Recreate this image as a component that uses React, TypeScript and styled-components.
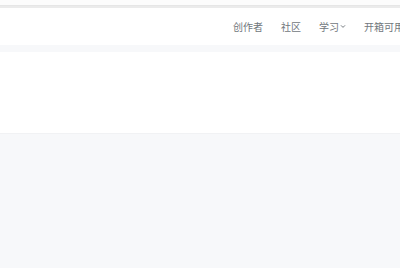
import React from "react";
import styled, { createGlobalStyle } from "styled-components";

const Global = createGlobalStyle`
  html, body { margin: 0; padding: 0; background: #f7f8fa; }
  body { font-family: "Noto Sans CJK SC", "Noto Sans", sans-serif; overflow: hidden; }
`;

const Page = styled.div`
  width: 400px;
  height: 268px;
  display: flex;
  flex-direction: column;
  overflow: hidden;
  background: #f7f8fa;
`;

const TopStrip = styled.div`
  height: 5px;
  background: #fcfcfc;
  border-bottom: 1px solid #e6e6e6;
  box-shadow: 0 2px 0 #ebebeb;
  flex-shrink: 0;
`;

const Header = styled.header`
  height: 37px;
  margin-top: 2px;
  background: #ffffff;
  display: flex;
  align-items: center;
  padding-left: 233px;
  flex-shrink: 0;
  overflow: hidden;
`;

const Nav = styled.nav`
  display: flex;
  align-items: center;
  gap: 18px;
  white-space: nowrap;
`;

const NavItem = styled.span`
  font-size: 10px;
  line-height: 14px;
  color: #71777c;
  display: inline-flex;
  align-items: center;
  gap: 1px;
`;

const Band = styled.div`
  height: 7px;
  background: #f7f8fa;
  flex-shrink: 0;
`;

const Panel = styled.section`
  height: 81px;
  background: #ffffff;
  border-bottom: 1px solid #f1f2f4;
  flex-shrink: 0;
`;

const Chevron = () => (
  <svg width="6" height="7" viewBox="0 0 6 8" fill="none">
    <path d="M1 3l2 2 2-2" stroke="#71777c" strokeWidth="1.1" strokeLinecap="round" strokeLinejoin="round" />
  </svg>
);

export default function App() {
  return (
    <>
      <Global />
      <Page>
        <TopStrip />
        <Header>
          <Nav>
            <NavItem>创作者</NavItem>
            <NavItem>社区</NavItem>
            <NavItem>
              学习
              <Chevron />
            </NavItem>
            <NavItem>开箱可用</NavItem>
          </Nav>
        </Header>
        <Band />
        <Panel />
      </Page>
    </>
  );
}
